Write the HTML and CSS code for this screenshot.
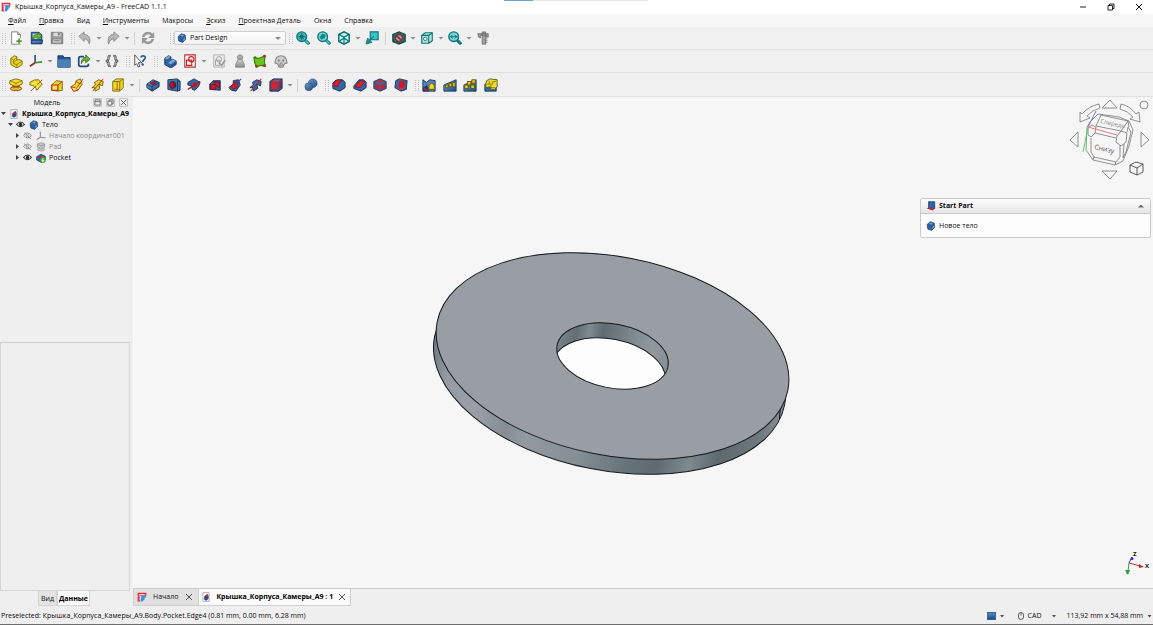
FILE: index.html
```html
<!DOCTYPE html>
<html lang="ru">
<head>
<meta charset="utf-8">
<title>Крышка_Корпуса_Камеры_A9 - FreeCAD 1.1.1</title>
<link rel="stylesheet" href="styles.css">
</head>
<body>
<svg class="defs" aria-hidden="true">
  <defs>
    <linearGradient id="gBlue" x1="0" y1="0" x2="1" y2="1"><stop offset="0" stop-color="#729fcf"/><stop offset="1" stop-color="#204a87"/></linearGradient>
    <linearGradient id="gGrey" x1="0" y1="0" x2="0" y2="1"><stop offset="0" stop-color="#d0d0d0"/><stop offset="1" stop-color="#8c8c8c"/></linearGradient>
  </defs>
  <symbol id="logo" viewBox="0 0 16 16"><path d="M1 1h14v5H5v9H1z" fill="#d6303a"/><path d="M3 3h10v2H4v8H3z" fill="#f6c8cb"/><path d="M7 6h8l-1 3h-3v1h2l-2 3h-1l-1 2H6z" fill="#3f8ee0"/></symbol>
  <symbol id="doc" viewBox="0 0 16 16"><path d="M3 1h10v14H3z" fill="#fff" stroke="#888"/><path d="M5 7l4-3 3 2v5l-4 3-3-2z" fill="#234f8e"/><path d="M7 5l4-2 1 4-4 2z" fill="#c4283a"/></symbol>
  <symbol id="new" viewBox="0 0 16 16"><path d="M3 1h7l3 3v11H3z" fill="#fff" stroke="#777"/><path d="M10 1v3h3" fill="#ddd" stroke="#777"/><circle cx="11.500" cy="11.500" r="3.500" fill="#fff"/><path d="M11.500 8.500v6M8.500 11.500h6" stroke="#4b9a35" stroke-width="2"/></symbol>
  <symbol id="open" viewBox="0 0 16 16"><path d="M1.500 1.500h9l3 3v10h-12z" fill="#3465a4" stroke="#173a63"/><path d="M3 3h9v6H3z" fill="#d8e4ec"/><path d="M3 9c0-4 3-6 6-5V2l5 4-5 4V7C7 7 5 8 3 9z" fill="#67b832" stroke="#285c0a" stroke-width=".7"/><path d="M1.500 14.500l1-4h12l-1 4z" fill="url(#gBlue)" stroke="#173a63"/></symbol>
  <symbol id="save" viewBox="0 0 16 16"><path d="M1.500 1.500h12l1 1v12h-13z" fill="#9a9a9a" stroke="#737373"/><path d="M4 2h8v4H4z" fill="#ddd"/><path d="M9 2h2v3H9z" fill="#777"/><path d="M3 9h10v5H3z" fill="#c9c9c9" stroke="#858585"/><path d="M5 11h6" stroke="#777"/></symbol>
  <symbol id="undo" viewBox="0 0 16 16"><path d="M1 6l6-5v3c5 0 8 4 6 11-1-4-3-6-6-6v3z" fill="#b7b7b7" stroke="#8c8c8c"/></symbol>
  <symbol id="redo" viewBox="0 0 16 16"><path d="M15 6L9 1v3C4 4 1 8 3 15c1-4 3-6 6-6v3z" fill="#b7b7b7" stroke="#8c8c8c"/></symbol>
  <symbol id="refresh" viewBox="0 0 16 16"><path d="M2.500 7c1-5 7-6 10-2.500M13.500 9c-1 5-7 6-10 2.500" fill="none" stroke="#999" stroke-width="2.800"/><path d="M15 1v7H8zM1 15V8h7z" fill="#999"/></symbol>
  <symbol id="body" viewBox="0 0 16 16"><path d="M2 5l4-3 3 1v4l2-1 4 2v4l-6 4-7-4z" fill="#3465a4" stroke="#122f55"/><path d="M2 5l4-3 3 1-4 3zM6 10l5-4 4 2-6 4z" fill="#7ba5d6"/><path d="M9 12v4l6-4V8z" fill="#2a5590"/></symbol>
  <symbol id="bodyround" viewBox="0 0 16 16"><path d="M2 5l5-4 6 2 1 7-5 5-6-2-1-4z" fill="#2f609f" stroke="#153967"/><path d="M5 4l3-2 3 2-3 2zM10 10l3-3v3l-3 3z" fill="#6f9bcd"/></symbol>
  <symbol id="zoomfit" viewBox="0 0 16 16"><path d="M10 10l5 5" stroke="#087f83" stroke-width="3.500"/><path d="M10 10l4.500 4.500" stroke="#3ec5c8" stroke-width="1.500"/><circle cx="6.500" cy="6.500" r="5.500" fill="#4fb9bc" stroke="#087478" stroke-width="1.600"/><path d="M6.500 2.500v8M2.500 6.500h8M4 4l5 5M9 4L4 9" stroke="#0b6165" stroke-width="1.100"/></symbol>
  <symbol id="zoomsel" viewBox="0 0 16 16"><path d="M10 10l5 5" stroke="#087f83" stroke-width="3.500"/><path d="M10 10l4.500 4.500" stroke="#3ec5c8" stroke-width="1.500"/><circle cx="6.500" cy="6.500" r="5.500" fill="#7fd2d5" stroke="#087478" stroke-width="1.600"/><path d="M3 7l3-4 4 1-1 4-4 2z" fill="#13868a"/></symbol>
  <symbol id="zoomarrow" viewBox="0 0 16 16"><path d="M10 10l5 5" stroke="#087f83" stroke-width="3.500"/><circle cx="6.500" cy="6.500" r="5.500" fill="#7fd2d5" stroke="#087478" stroke-width="1.600"/><path d="M3 6.500h7M5 4.500l-2 2 2 2M8 4.500l2 2-2 2" fill="none" stroke="#066"/></symbol>
  <symbol id="cube" viewBox="0 0 16 16"><path d="M2 4l6-3 6 3v8l-6 3-6-3z" fill="#c7eeee" stroke="#0b7175" stroke-width="1.600"/><path d="M2 4l6 3 6-3M8 7v8M2 12l6-4 6 4" fill="none" stroke="#0b7175" stroke-width="1.300"/></symbol>
  <symbol id="wire" viewBox="0 0 16 16"><path d="M2 5l4-3h8v9l-4 3H2z" fill="#b6e4e3" stroke="#0b7175" stroke-width="1.300"/><path d="M2 5h8l4-3M10 5v9" fill="none" stroke="#0b7175" stroke-width="1.200"/><circle cx="6" cy="9" r="2" fill="#e9ffff" stroke="#187276"/></symbol>
  <symbol id="align" viewBox="0 0 16 16"><path d="M6 1h9v9H6z" fill="#37c4c7" stroke="#087478" stroke-width="1.300"/><path d="M10 6l-5 4-2-2-2 7 7-2-2-2z" fill="#188f94" stroke="#066" stroke-width=".7"/></symbol>
  <symbol id="noentry" viewBox="0 0 16 16"><path d="M1 4l7-3 7 3v8l-7 3-7-3z" fill="#1d7377" stroke="#164547" stroke-width="1.500"/><circle cx="8" cy="8" r="4" fill="#8fb4b4" stroke="#9a2424" stroke-width="1.700"/><path d="M5 5l6 6" stroke="#9a2424" stroke-width="1.700"/></symbol>
  <symbol id="caliper" viewBox="0 0 16 16"><path d="M7 1h4v14H7zM2 3h12v4h-2V5H5v3L3 7z" fill="#a0a0a0" stroke="#5d5d5d" stroke-width=".8"/><path d="M11 9h2M11 11h2M11 13h2" stroke="#777"/></symbol>
  <symbol id="partyellow" viewBox="0 0 16 16"><path d="M2 5l4-3 3 1v4l2-1 4 2v4l-6 4-7-4z" fill="#edd423" stroke="#796908"/><path d="M2 5l3 2v4l4 1v4M5 7l4-3M9 12l6-4M5 10l5-4" fill="none" stroke="#796908" stroke-width=".8"/></symbol>
  <symbol id="axes" viewBox="0 0 16 16"><path d="M7 1v9" stroke="#345d8c" stroke-width="2"/><path d="M7 10l8-1" stroke="#389035" stroke-width="2"/><path d="M7 10l-6 4" stroke="#972c26" stroke-width="2"/></symbol>
  <symbol id="axesgrey" viewBox="0 0 16 16"><path d="M7 1v9l8 1M7 10l-6 4" fill="none" stroke="#929292" stroke-width="1.800"/></symbol>
  <symbol id="folder" viewBox="0 0 16 16"><path d="M1 2h6l1 2h7v11H1z" fill="#26568f" stroke="#183c6a"/><path d="M1 6h14v9H1z" fill="#4c7eb8"/></symbol>
  <symbol id="link" viewBox="0 0 16 16"><path d="M8 3H4Q2 3 2 5v7q0 2 2 2h7q2 0 2-2v-1" fill="none" stroke="#204b7e" stroke-width="2"/><path d="M5 11c0-5 2-7 5-7V1l5 5-5 4V7c-2 0-4 1-5 4z" fill="#68b737" stroke="#28570c" stroke-width=".8"/></symbol>
  <symbol id="braces" viewBox="0 0 16 16"><path d="M6.500 2H6Q4 2 4 4v2L2 8l2 2v2q0 2 2 2h.5M9.500 2h.5q2 0 2 2v2l2 2-2 2v2q0 2-2 2h-.5" fill="none" stroke="#444" stroke-width="2.400"/><path d="M6 2Q4 2 4 4v2L2 8l2 2v2q0 2 2 2M10 2q2 0 2 2v2l2 2-2 2v2q0 2-2 2" fill="none" stroke="#ddd" stroke-width=".8"/></symbol>
  <symbol id="help" viewBox="0 0 16 16"><path d="M2 1l8 9H6l2 4-2 1-2-4-2 2z" fill="#fff" stroke="#444"/><path d="M9 4c1-3 5-2 5 0 0 3-3 2-3 5" fill="none" stroke="#2d5c94" stroke-width="2"/><circle cx="11" cy="12" r="1.400" fill="#2d5c94"/></symbol>
  <symbol id="sketch" viewBox="0 0 16 16"><path d="M2 1h12v14H2z" fill="#fff" stroke="#b92d2d" stroke-width="1.200"/><path d="M4 7h6v6H4z" fill="none" stroke="#ce1f27" stroke-width="1.300"/><circle cx="9.500" cy="6" r="3" fill="none" stroke="#ce1f27" stroke-width="1.300"/></symbol>
  <symbol id="sketchgrey" viewBox="0 0 16 16"><path d="M2 1h12v14H2z" fill="#ededed" stroke="#aaa"/><path d="M4 7h5v6H4z" fill="none" stroke="#999"/><circle cx="8" cy="6" r="3" fill="none" stroke="#999"/><path d="M8 10l3 3 4-6" fill="none" stroke="#999" stroke-width="2"/></symbol>
  <symbol id="pawn" viewBox="0 0 16 16"><circle cx="8" cy="4" r="3" fill="#aaa" stroke="#888"/><path d="M6 6h4l3 6v3H3v-3z" fill="url(#gGrey)" stroke="#888"/></symbol>
  <symbol id="green" viewBox="0 0 16 16"><path d="M1 4l5 1 8-3-1 6 1 6-5-1-5 2-2-5z" fill="#67c818" stroke="#347709" stroke-width="1.200"/><circle cx="13" cy="2.500" r="1.600" fill="#b42f22"/><circle cx="4" cy="14" r="1.600" fill="#b42f22"/><circle cx="2.500" cy="4" r="1.300" fill="#43780d"/><circle cx="13" cy="13" r="1.600" fill="#b42f22"/></symbol>
  <symbol id="dolly" viewBox="0 0 16 16"><path d="M1 10q1-8 7-8t7 8l-3 1-2 4H6l-2-4z" fill="#cecece" stroke="#888" stroke-width="1.300"/><circle cx="5.500" cy="7.500" r="1.200" fill="#777"/><circle cx="10.500" cy="7.500" r="1.200" fill="#777"/><path d="M7 10h2l1 3H6z" fill="#aaa" stroke="#888" stroke-width=".7"/></symbol>
  <symbol id="pad" viewBox="0 0 16 16"><ellipse cx="8" cy="12" rx="6.500" ry="2.500" fill="#d7c42b" stroke="#a22b1a"/><path d="M4 8h8v3H4z" fill="#b43a1a"/><path d="M1 3l7-2 7 2v4l-7 3-7-3z" fill="#f2dc2b" stroke="#75670c"/><path d="M1 3l7 3 7-3M8 6v4" fill="none" stroke="#75670c" stroke-width=".8"/></symbol>
  <symbol id="revolve" viewBox="0 0 16 16"><path d="M1 5q5-4 10-3l4 5-6 7q-2-6-8-6z" fill="#f2dc2b" stroke="#75670c"/><path d="M2 15L15 2" stroke="#a34d16" stroke-width="1.100"/><path d="M4 6q5 0 6 4" fill="none" stroke="#fff59c"/></symbol>
  <symbol id="loft" viewBox="0 0 16 16"><path d="M2 8l5-5 7 1v10l-5 1-7-1z" fill="#edce24" stroke="#75670c"/><path d="M2 8h7v6H2z" fill="#f8e654" stroke="#c32020" stroke-width="1.300"/><path d="M9 8l5-4" stroke="#c32020"/></symbol>
  <symbol id="pipe" viewBox="0 0 16 16"><path d="M1 10l5-3 1-4 5-2 2 6-5 7-5 1z" fill="#f0d728" stroke="#75670c"/><path d="M1 10l5 1 3 3-5 1z" fill="#ffee67" stroke="#ba2920"/><path d="M8 11L15 1M7 4l5 3" stroke="#ba2920"/></symbol>
  <symbol id="helix" viewBox="0 0 16 16"><path d="M1 11l4-3-1-3 5-3 5 2-1 5-4-2 1 5-5 3-1-4z" fill="#efd62a" stroke="#695b08"/><path d="M2 15L14 1" stroke="#ba2920" stroke-width="1.100"/></symbol>
  <symbol id="box" viewBox="0 0 16 16"><path d="M2 4l4-3h8v10l-4 4H2z" fill="#f0d728" stroke="#75670c"/><path d="M2 4h8l4-3M10 4v11" fill="none" stroke="#75670c"/><path d="M7 13V4M4 13h6" stroke="#b94b1d"/></symbol>
  <symbol id="pocket" viewBox="0 0 16 16"><path d="M1 7l7-5 7 3v5l-8 5-6-4z" fill="url(#gBlue)" stroke="#122f55"/><path d="M1 7l6 3 8-5M7 10v5" fill="none" stroke="#122f55" stroke-width=".8"/><path d="M5 6l4-2 3 1-4 3z" fill="#cc1c27" stroke="#4c1530" stroke-width=".8"/></symbol>
  <symbol id="hole" viewBox="0 0 16 16"><path d="M1 2l11-1 3 3v10l-3 1-11-2z" fill="#3f72b0" stroke="#122f55"/><path d="M12 3v12M12 3l3 1" stroke="#122f55"/><ellipse cx="6.500" cy="8" rx="3.500" ry="4" fill="#bd1822" stroke="#271d38"/><path d="M7 5q3 3 0 6" fill="none" stroke="#3e1730"/></symbol>
  <symbol id="groove" viewBox="0 0 16 16"><path d="M1 5l7-4 7 4-2 5-4 4-3-1-1-4-4-1z" fill="#3465a4" stroke="#122f55"/><path d="M5 7l5-2 3 3-4 3z" fill="#d21b24"/><path d="M1 13L15 4" stroke="#aa1820" stroke-width="1.400"/></symbol>
  <symbol id="loftred" viewBox="0 0 16 16"><path d="M2 7l4-4h8v11l-12-1z" fill="#3465a4" stroke="#122f55"/><path d="M3 7l6 1v5H3zM6 4l7 1v7l-3-3z" fill="#d61822" stroke="#65152a"/></symbol>
  <symbol id="pipered" viewBox="0 0 16 16"><path d="M1 11l5-4V3l6-1 2 6-5 7-5-1z" fill="#3465a4" stroke="#122f55"/><path d="M3 10l4-5 5-1-2 7-4 2z" fill="#d61822" stroke="#65152a" stroke-width=".7"/><path d="M9 7l6-6" stroke="#2c5ba0" stroke-width="1.500"/></symbol>
  <symbol id="helixred" viewBox="0 0 16 16"><path d="M1 11l4-3-1-3 5-3 5 2-1 5-4-2 1 5-5 3-1-4z" fill="#386eaf" stroke="#122f55"/><path d="M2 15L14 1" stroke="#ba2920" stroke-width="1.200"/></symbol>
  <symbol id="boxred" viewBox="0 0 16 16"><path d="M1 4l4-3h10v11l-4 3H1z" fill="#2e5690" stroke="#122f55"/><path d="M2 5h8v8H2z" fill="#d7212b"/><path d="M3 4l3-2h7l-2 2z" fill="#e23b42"/><path d="M12 5l2-2v8l-2 2z" fill="#a91b2b"/></symbol>
  <symbol id="bool" viewBox="0 0 16 16"><circle cx="10" cy="6" r="5" fill="url(#gBlue)" stroke="#244f83" stroke-width=".7"/><circle cx="5.500" cy="10" r="4.500" fill="url(#gBlue)" stroke="#244f83" stroke-width=".7"/></symbol>
  <symbol id="fillet" viewBox="0 0 16 16"><path d="M1 6q2-4 6-4h5l3 3v6l-6 4-8-3z" fill="#3465a4" stroke="#122f55"/><path d="M1 9q1-6 6-7l5 1q-5 2-5 7z" fill="#d9202a" stroke="#65152a" stroke-width=".7"/></symbol>
  <symbol id="chamfer" viewBox="0 0 16 16"><path d="M1 9l6-7h5l3 3v6l-6 4-8-3z" fill="#3465a4" stroke="#122f55"/><path d="M2 10l6-7 6 1-6 7z" fill="#dd222b" stroke="#65152a" stroke-width=".7"/></symbol>
  <symbol id="draft" viewBox="0 0 16 16"><path d="M1 4l7-3 7 3v8l-7 3-7-3z" fill="#3465a4" stroke="#122f55"/><path d="M2 6l5 2v6l-4-2zM9 8l5-2-1 6-4 2z" fill="#cf202a"/><path d="M3 4l5-2 5 2-5 2z" fill="#b8303e"/></symbol>
  <symbol id="thick" viewBox="0 0 16 16"><path d="M2 3l4-2 9 2-1 10-6 2-7-4z" fill="#3465a4" stroke="#122f55"/><path d="M6 3l7 1-1 7H5z" fill="#cc1d27"/><path d="M5 11h7l-4 3-5-3z" fill="#e23138"/></symbol>
  <symbol id="mirror" viewBox="0 0 16 16"><path d="M1 15V2l4 3 4-3 6 1v12z" fill="#5583b9" stroke="#122f55"/><path d="M1 11l5-3 2 7H1z" fill="#1d3767"/><path d="M8 8l3-2 3 2v5H8z" fill="#efd62a" stroke="#695b08"/><path d="M2 12l4 2" stroke="#c52a25" stroke-width="2"/></symbol>
  <symbol id="linear" viewBox="0 0 16 16"><path d="M1 8l14-6v13H1z" fill="url(#gBlue)" stroke="#173a63"/><path d="M3 8h3v3H3zM7 6h3v4H7zM11 5h3v5h-3z" fill="#e0c823" stroke="#5e560f"/></symbol>
  <symbol id="polar" viewBox="0 0 16 16"><path d="M1 8l14-6v13H1z" fill="url(#gBlue)" stroke="#173a63"/><path d="M2 8h4v4H2zM5 4h4v4H5zM10 2h4v4h-4zM9 8h4v4H9z" fill="#e0c823" stroke="#5e560f"/></symbol>
  <symbol id="multi" viewBox="0 0 16 16"><path d="M1 7L14 2v13H1z" fill="#3465a4" stroke="#173a63"/><path d="M3 3l4-2 8 1v8l-3 3H8l-1-3-5 1V7z" fill="#edda33" stroke="#5e560f"/><path d="M6 3v4h4V4h4M8 8v3h5M3 7h3" fill="none" stroke="#8c7d18"/></symbol>
  <symbol id="eye" viewBox="0 0 16 16"><path d="M1 8q7-9 14 0-7 8-14 0z" fill="#fff" stroke="#222" stroke-width="1.800"/><circle cx="8" cy="8" r="3" fill="#222"/></symbol>
  <symbol id="eyeoff" viewBox="0 0 16 16"><path d="M1 8q7-9 14 0-7 8-14 0zM2 3l12 11" fill="none" stroke="#888" stroke-width="1.500"/><circle cx="8" cy="8" r="2.500" fill="none" stroke="#888"/></symbol>
  <symbol id="padgrey" viewBox="0 0 16 16"><ellipse cx="8" cy="12" rx="6" ry="2.500" fill="#ccc" stroke="#999"/><path d="M2 3l6-2 6 2v5l-6 3-6-3z" fill="#c9c9c9" stroke="#898989"/><path d="M2 4l6 2 6-2" fill="none" stroke="#898989"/></symbol>
  <symbol id="pockettree" viewBox="0 0 16 16"><path d="M1 6l7-4 7 3v6l-7 4-7-4z" fill="#3465a4" stroke="#122f55"/><path d="M5 4l5 1v4l-5-1z" fill="#c42834"/><circle cx="11" cy="11" r="4.500" fill="#42a51f"/><path d="M11 8v5M9 11l2 3 2-3" stroke="#fff" stroke-width="1.500" fill="none"/></symbol>
  <symbol id="part" viewBox="0 0 16 16"><path d="M4 1h10v11H4z" fill="#2d5c9c" stroke="#203966"/><path d="M8 2v9" stroke="#5c86bb"/><path d="M1 12l4-2 9 2-3 3z" fill="#b82834"/></symbol>
  <symbol id="mouse" viewBox="0 0 16 16"><rect x="3" y="1" width="10" height="14" rx="5" fill="none" stroke="#333" stroke-width="1.500"/><path d="M8 2v5" stroke="#333" stroke-width="1.500"/></symbol>
  <symbol id="close" viewBox="0 0 16 16"><path d="M2 2l12 12M14 2L2 14" stroke="currentColor" stroke-width="2"/></symbol>
  <symbol id="max" viewBox="0 0 16 16"><path d="M2 5h9v9H2zM5 5V2h9v9h-3" fill="none" stroke="currentColor" stroke-width="1.800"/></symbol>
  <symbol id="dock" viewBox="0 0 16 16"><path d="M2 2h12v12H2zM2 6h12" fill="none" stroke="currentColor" stroke-width="1.800"/></symbol>
</svg>

<div class="app">
  <header class="titlebar">
    <svg class="ic10"><use href="#logo"/></svg>
    <h1 class="title">Крышка_Корпуса_Камеры_A9 - FreeCAD 1.1.1</h1>
    <span class="snap"></span>
    <div class="winbtns">
      <button class="win" aria-label="Свернуть"><svg class="ic8" viewBox="0 0 16 16"><path d="M2 8h12" stroke="#222" stroke-width="2"/></svg></button>
      <button class="win" aria-label="Развернуть"><svg class="ic8"><use href="#max"/></svg></button>
      <button class="win" aria-label="Закрыть"><svg class="ic8"><use href="#close"/></svg></button>
    </div>
  </header>

  <nav class="menubar">
    <button class="menu"><u>Ф</u>айл</button><button class="menu"><u>П</u>равка</button><button class="menu">Вид</button><button class="menu"><u>И</u>нструменты</button><button class="menu">Макросы</button><button class="menu"><u>Э</u>скиз</button><button class="menu"><u>П</u>роектная Деталь</button><button class="menu">Окна</button><button class="menu">Справка</button>
  </nav>

  <div class="toolbar">
    <i class="grip"></i>
    <div class="group g3">
      <button class="btn" aria-label="Создать"><svg><use href="#new"/></svg></button>
      <button class="btn" aria-label="Открыть"><svg><use href="#open"/></svg></button>
      <button class="btn" aria-label="Сохранить"><svg><use href="#save"/></svg></button>
    </div>
    <i class="grip gap"></i>
    <div class="group">
      <button class="btn" aria-label="Отменить"><svg><use href="#undo"/></svg></button><i class="caret"></i>
      <button class="btn" aria-label="Повторить"><svg><use href="#redo"/></svg></button><i class="caret"></i>
      <i class="sep"></i>
      <button class="btn" aria-label="Обновить"><svg><use href="#refresh"/></svg></button>
    </div>
    <i class="grip wide"></i>
    <div class="combo">
      <svg class="ic10"><use href="#bodyround"/></svg>
      <select aria-label="Верстак"><option>Part Design</option></select>
      <i class="caret"></i>
    </div>
    <i class="grip near"></i>
    <div class="group g3">
      <button class="btn" aria-label="Вместить всё"><svg><use href="#zoomfit"/></svg></button>
      <button class="btn" aria-label="Вместить выделенное"><svg><use href="#zoomsel"/></svg></button>
      <button class="btn" aria-label="Вид"><svg><use href="#cube"/></svg></button>
    </div>
    <i class="caret"></i>
    <div class="group">
      <button class="btn" aria-label="Выровнять"><svg><use href="#align"/></svg></button>
      <i class="sep"></i>
      <button class="btn" aria-label="Стиль отображения"><svg><use href="#noentry"/></svg></button><i class="caret"></i>
      <button class="btn" aria-label="Каркас"><svg><use href="#wire"/></svg></button><i class="caret"></i>
      <button class="btn" aria-label="Масштаб"><svg><use href="#zoomarrow"/></svg></button><i class="caret"></i>
      <button class="btn" aria-label="Измерить"><svg><use href="#caliper"/></svg></button>
    </div>
  </div>

  <div class="toolbar">
    <i class="grip"></i>
    <div class="group">
      <button class="btn" aria-label="Деталь"><svg><use href="#partyellow"/></svg></button>
      <button class="btn" aria-label="Оси"><svg><use href="#axes"/></svg></button><i class="caret"></i>
      <button class="btn" aria-label="Группа"><svg><use href="#folder"/></svg></button>
      <button class="btn" aria-label="Ссылка"><svg><use href="#link"/></svg></button><i class="caret"></i>
      <button class="btn" aria-label="Выражения"><svg><use href="#braces"/></svg></button>
    </div>
    <i class="grip gap"></i>
    <button class="btn" aria-label="Что это?"><svg><use href="#help"/></svg></button>
    <i class="grip gap"></i>
    <div class="group second">
      <button class="btn" aria-label="Новое тело"><svg><use href="#body"/></svg></button>
      <button class="btn" aria-label="Эскиз"><svg><use href="#sketch"/></svg></button><i class="caret"></i>
    </div>
    <div class="group g4">
      <button class="btn" aria-label="Проверить эскиз"><svg><use href="#sketchgrey"/></svg></button>
      <button class="btn" aria-label="Проверить геометрию"><svg><use href="#pawn"/></svg></button>
      <button class="btn" aria-label="Связующий объект"><svg><use href="#green"/></svg></button>
      <button class="btn" aria-label="Клон"><svg><use href="#dolly"/></svg></button>
    </div>
  </div>

  <div class="toolbar last">
    <i class="grip"></i>
    <div class="group g6">
      <button class="btn" aria-label="Выдавить"><svg><use href="#pad"/></svg></button>
      <button class="btn" aria-label="Вращение"><svg><use href="#revolve"/></svg></button>
      <button class="btn" aria-label="Профиль"><svg><use href="#loft"/></svg></button>
      <button class="btn" aria-label="Труба"><svg><use href="#pipe"/></svg></button>
      <button class="btn" aria-label="Спираль"><svg><use href="#helix"/></svg></button>
      <button class="btn" aria-label="Примитив"><svg><use href="#box"/></svg></button>
    </div>
    <i class="caret"></i><i class="sep"></i>
    <div class="group g7">
      <button class="btn" aria-label="Карман"><svg><use href="#pocket"/></svg></button>
      <button class="btn" aria-label="Отверстие"><svg><use href="#hole"/></svg></button>
      <button class="btn" aria-label="Проточка"><svg><use href="#groove"/></svg></button>
      <button class="btn" aria-label="Вычесть профиль"><svg><use href="#loftred"/></svg></button>
      <button class="btn" aria-label="Вычесть трубу"><svg><use href="#pipered"/></svg></button>
      <button class="btn" aria-label="Вычесть спираль"><svg><use href="#helixred"/></svg></button>
      <button class="btn" aria-label="Вычесть примитив"><svg><use href="#boxred"/></svg></button>
    </div>
    <i class="caret"></i><i class="sep"></i>
    <button class="btn" aria-label="Булева операция"><svg><use href="#bool"/></svg></button>
    <i class="grip gap"></i>
    <div class="group g4">
      <button class="btn" aria-label="Скругление"><svg><use href="#fillet"/></svg></button>
      <button class="btn" aria-label="Фаска"><svg><use href="#chamfer"/></svg></button>
      <button class="btn" aria-label="Уклон"><svg><use href="#draft"/></svg></button>
      <button class="btn" aria-label="Толщина"><svg><use href="#thick"/></svg></button>
    </div>
    <i class="grip gap"></i>
    <div class="group g4">
      <button class="btn" aria-label="Отражение"><svg><use href="#mirror"/></svg></button>
      <button class="btn" aria-label="Линейный массив"><svg><use href="#linear"/></svg></button>
      <button class="btn" aria-label="Круговой массив"><svg><use href="#polar"/></svg></button>
      <button class="btn" aria-label="Множественное преобразование"><svg><use href="#multi"/></svg></button>
    </div>
  </div>

  <div class="work">
    <aside class="side">
      <div class="dockhead">
        <h2 class="docktitle">Модель</h2>
        <button class="dockbtn" aria-label="Свернуть панель"><svg><use href="#dock"/></svg></button>
        <button class="dockbtn" aria-label="Открепить"><svg><use href="#max"/></svg></button>
        <button class="dockbtn" aria-label="Закрыть панель"><svg><use href="#close"/></svg></button>
      </div>
      <ul class="tree">
        <li class="node root"><i class="tri"></i><svg class="ic10"><use href="#doc"/></svg><span>Крышка_Корпуса_Камеры_A9</span></li>
        <li class="node l1"><i class="tri"></i><svg class="eye"><use href="#eye"/></svg><svg class="ic10"><use href="#bodyround"/></svg><span>Тело</span></li>
        <li class="node l2 off"><i class="tri shut"></i><svg class="eye"><use href="#eyeoff"/></svg><svg class="ic10"><use href="#axesgrey"/></svg><span>Начало координат001</span></li>
        <li class="node l2 off"><i class="tri shut"></i><svg class="eye"><use href="#eyeoff"/></svg><svg class="ic10"><use href="#padgrey"/></svg><span>Pad</span></li>
        <li class="node l2"><i class="tri shut"></i><svg class="eye"><use href="#eye"/></svg><svg class="ic10"><use href="#pockettree"/></svg><span>Pocket</span></li>
      </ul>
      <div class="props"></div>
      <div class="sidetabs"><button class="stab">Вид</button><button class="stab on">Данные</button></div>
    </aside>

    <main class="main">
      <div class="view">
        <svg class="scene" viewBox="133 97 1020 491">
          <defs>
            <linearGradient id="rim" gradientUnits="userSpaceOnUse" x1="433" y1="0" x2="786" y2="0">
              <stop offset="0" stop-color="#737d84"/><stop offset=".05" stop-color="#959ca3"/><stop offset=".15" stop-color="#989fa6"/><stop offset=".24" stop-color="#858e95"/><stop offset=".3" stop-color="#929aa1"/><stop offset=".45" stop-color="#858f96"/><stop offset=".6" stop-color="#667279"/><stop offset=".68" stop-color="#5f6b71"/><stop offset=".77" stop-color="#7e8a8e"/><stop offset=".85" stop-color="#5d686f"/><stop offset=".95" stop-color="#6e797f"/><stop offset="1" stop-color="#848d93"/>
            </linearGradient>
            <linearGradient id="bore" gradientUnits="userSpaceOnUse" x1="555" y1="0" x2="668" y2="0">
              <stop offset="0" stop-color="#7b858b"/><stop offset=".15" stop-color="#626d74"/><stop offset=".26" stop-color="#7f8b8f"/><stop offset=".38" stop-color="#5f6b72"/><stop offset=".6" stop-color="#78838a"/><stop offset=".85" stop-color="#929aa1"/><stop offset="1" stop-color="#858e95"/>
            </linearGradient>
            <clipPath id="bclip"><ellipse cx="612" cy="356" rx="56.500" ry="32" transform="rotate(11 612 356)"/></clipPath>
          </defs>
          <g stroke="#16191c" stroke-width="1">
            <ellipse cx="609" cy="371" rx="178.500" ry="99.500" transform="rotate(11 609 371)" fill="url(#rim)"/>
            <path d="M780 407l-1 13" fill="none"/>
            <ellipse cx="612" cy="356" rx="178.800" ry="99.500" transform="rotate(11 612 356)" fill="#989ea4"/>
            <ellipse cx="612" cy="356" rx="56.500" ry="32" transform="rotate(11 612 356)" fill="url(#bore)" stroke="none"/>
            <g clip-path="url(#bclip)"><ellipse cx="609" cy="371" rx="56.500" ry="32" transform="rotate(11 609 371)" fill="#fdfdfd"/></g>
            <ellipse cx="612" cy="356" rx="56.500" ry="32" transform="rotate(11 612 356)" fill="none"/>
          </g>
        </svg>

        <svg class="navcube" viewBox="1065 97 88 87">
          <g fill="none" stroke="#777" stroke-width=".8" stroke-linejoin="round">
            <path d="M1102 108h15l-7-8zM1102 171h15l-7 8zM1078 132v15l-8-7zM1141 132v15l8-7z"/>
            <circle cx="1144" cy="105" r="4"/>
            <path d="M1080 112l2 2q7-8 17-10l1 4q-8 2-13 8l3 2-10 4zM1121 104q9 2 15 10l3-2 1 10-10-3 3-2q-5-6-13-8z"/>
            <path d="M1098 114l21 3 10 4 4 9-4 16-6 15-8 4-22-5-7-10 1-23 3-5z"/>
            <path d="M1101 115l27 6-7 10-25-5zM1088 128l4-3 4 2-1 6-4 4-3-2zM1095 133l21 5M1117 136l4-5 6 2-1 9-5 4-5-4zM1091 138v14l3 5 22 5 4-5v-12M1094 157l-1 3M1116 162l-1 3M1124 144l-1 14 3-6 5-20-3-5-1 5M1128 121l1 6"/>
            <path d="M1130 165l6-3 7 2v8l-6 3-7-3zM1130 165l7 3 6-4M1137 168v7" stroke="#333"/>
          </g>
          <path d="M1088 127l8-16" stroke="#7476dc"/><path d="M1088 127l-5 25" stroke="#55dc61"/><path d="M1088 127l29 8" stroke="#ed7c7c"/>
          <text class="face" x="1094" y="149" transform="rotate(13 1094 149)">Снизу</text>
          <text class="face small" x="1100" y="123" transform="rotate(12 1100 123)">Спереди</text>
        </svg>

        <section class="task">
          <button class="taskhead"><svg class="ic10"><use href="#part"/></svg><span>Start Part</span><i class="up"></i></button>
          <button class="taskitem"><svg class="ic10"><use href="#bodyround"/></svg><span>Новое тело</span></button>
        </section>

        <svg class="triad" viewBox="1120 545 33 35">
          <path d="M1129 563l2-4" stroke="#2929cc"/><circle cx="1132" cy="558.500" r="1.500" fill="#2929cc"/>
          <path d="M1129 563l11 3" stroke="#bf2d2d"/><path d="M1139 564l5 3-5 1z" fill="#bf2d2d"/>
          <path d="M1129 563l-1 8" stroke="#27a53b"/>
          <text class="ax" x="1133" y="556">Z</text><text class="ax" x="1145" y="568">X</text><text class="ax" x="1126" y="574">Y</text>
          <path d="M1125 570h5l-3 5z" fill="#27a53b" fill-opacity=".8"/>
        </svg>
      </div>
      <div class="doctabs">
        <div class="dtab first"><svg class="ic10"><use href="#logo"/></svg><button class="dname">Начало</button><button class="x" aria-label="Закрыть вкладку"><svg><use href="#close"/></svg></button></div>
        <div class="dtab on"><svg class="ic10"><use href="#doc"/></svg><button class="dname">Крышка_Корпуса_Камеры_A9 : 1</button><button class="x" aria-label="Закрыть вкладку"><svg><use href="#close"/></svg></button></div>
      </div>
    </main>
  </div>

  <footer class="status">
    <span class="msg">Preselected: Крышка_Корпуса_Камеры_A9.Body.Pocket.Edge4 (0.81 mm, 0.00 mm, 6.28 mm)</span>
    <button class="sbtn" aria-label="Уведомления"><i class="swatch"></i><i class="dark"></i></button>
    <button class="sbtn nav"><svg class="ic8"><use href="#mouse"/></svg><span>CAD</span><i class="dark far"></i></button>
    <button class="sbtn"><span>113,92 mm x 54,88 mm</span><i class="dark"></i></button>
  </footer>
</div>
</body>
</html>
```

FILE: styles.css
```css
* { box-sizing: border-box; }
body { margin: 0; font-family: "Open Sans", "Noto Sans", sans-serif; font-size: 7px; line-height: 10px; color: #0c0c0c; background: #efefef; }
button, select { margin: 0; padding: 0; border: 0; background: none; font: inherit; color: inherit; }
h1, h2, ul { margin: 0; padding: 0; font: inherit; list-style: none; }
i { display: block; flex: none; }
svg { display: block; flex: none; }
.defs { position: absolute; width: 0; height: 0; }
.app { display: flex; flex-direction: column; min-height: 100vh; }
.ic8 { width: 8px; height: 8px; }
.ic10 { width: 10px; height: 10px; }

.titlebar { position: relative; display: flex; align-items: center; height: 14px; padding-left: 1px; gap: 4px; background: #fff; }
.snap { position: absolute; left: 504px; top: 0; width: 144px; height: 1px; border-left: 29px solid #6fa3d8; background: #e4e4e4; }
.winbtns { display: flex; margin-left: auto; height: 14px; }
.win { display: flex; align-items: center; justify-content: center; width: 28px; height: 13px; }

.menubar { display: flex; align-items: center; height: 13px; padding-left: 8px; gap: 13px; background: #f7f7f7; }
.menu { white-space: nowrap; }

.toolbar { display: flex; align-items: center; height: 23px; border-bottom: 1px solid #e0e0e0; background: #f0f0f0; padding-left: 2px; }
.toolbar.last { height: 24px; padding-top: 1px; }
.group { display: flex; align-items: center; justify-content: space-between; }
.g3 { width: 61px; }
.g4 { width: 82px; }
.g6 { width: 122px; }
.g7 { width: 143px; }
.second { margin: 0 1px 0 2px; }
.btn { display: flex; align-items: center; justify-content: center; flex: none; width: 20px; height: 20px; }
.btn svg { width: 14px; height: 14px; }
.grip { width: 4px; height: 13px; background: linear-gradient(#f0f0f0 1px, transparent 1px) 0 0 / 100% 2px, linear-gradient(90deg, #c4c4c4 1px, transparent 1px) 0 0 / 3px 100%; }
.grip.gap { margin-left: 4px; }
.grip.wide { margin-left: 12px; }
.grip.near { margin-left: 3px; }
.sep { width: 1px; height: 13px; margin: 0 3px; background: #d0d0d0; }
.caret { width: 8px; height: 3px; background: #8b8b8b; clip-path: polygon(1px 0, 7px 0, 4px 3px); }
.combo { position: relative; width: 112px; height: 14px; }
.combo select { width: 112px; height: 14px; padding-left: 15px; border: 1px solid #cfcfcf; border-radius: 2px; background: linear-gradient(#fdfdfd, #f3f3f3); appearance: none; }
.combo .ic10 { position: absolute; left: 3px; top: 2px; }
.combo .caret { position: absolute; right: 4px; top: 6px; }

.work { display: flex; flex: 1; }
.side { display: flex; flex-direction: column; width: 133px; }
.dockhead { display: flex; align-items: center; height: 11px; padding: 0 5px; gap: 4px; }
.docktitle { flex: 1; text-align: center; }
.dockbtn { display: flex; align-items: center; justify-content: center; width: 9px; height: 9px; border: 1px solid #c4c4c4; border-radius: 1px; color: #555; }
.dockbtn svg { width: 7px; height: 7px; }
.tree { flex: 1; }
.node { display: flex; align-items: center; height: 11px; gap: 3px; padding-left: 1px; white-space: nowrap; }
.root { font-weight: bold; color: #000; }
.l1 { padding-left: 8px; }
.l2 { padding-left: 15px; }
.off { color: #8b8b8b; }
.tri { width: 5px; height: 3px; background: #444; clip-path: polygon(0 0, 100% 0, 50% 100%); }
.tri.shut { height: 5px; clip-path: polygon(20% 0, 80% 50%, 20% 100%); }
.eye { width: 9px; height: 9px; margin-right: 1px; }
.props { height: 249px; margin-right: 3px; border: 1px solid #d4d4d4; border-top-color: #cecece; }
.sidetabs { display: flex; height: 15px; padding-left: 38px; }
.stab { padding: 1px 2px 0; height: 15px; border: 1px solid #d4d4d4; border-top: 0; background: #e4e4e4; }
.stab.on { padding: 1px 1px 0; background: #fbfbfb; font-weight: bold; color: #000; }

.main { display: flex; flex-direction: column; flex: 1; }
.view { position: relative; flex: 1; background: #f6f6f6; border-left: 1px solid #fafafa; }
.scene { position: absolute; inset: 0; width: 100%; height: 100%; }
.navcube { position: absolute; top: 0; right: 0; width: 88px; height: 87px; }
.triad { position: absolute; right: 0; bottom: 8px; width: 33px; height: 35px; }
.face { font-size: 7px; fill: #555; }
.face.small { font-size: 6px; fill: #888; }
.ax { font-size: 6px; font-weight: bold; fill: #111; }
.task { position: absolute; top: 101px; right: 2px; width: 231px; border: 1px solid #cbcbcb; border-radius: 2px; background: #fcfcfc; }
.taskhead { display: flex; align-items: center; width: 100%; height: 15px; padding: 0 6px 0 5px; gap: 3px; border-bottom: 1px solid #cbcbcb; background: linear-gradient(#fdfdfd, #e6e6e6); font-weight: bold; }
.taskitem { display: flex; align-items: center; height: 23px; padding-left: 5px; gap: 3px; }
.up { width: 6px; height: 3px; margin-left: auto; background: #666; clip-path: polygon(0 100%, 100% 100%, 50% 0); }

.doctabs { display: flex; height: 18px; border-top: 1px solid #c9cdc6; }
.dtab { display: flex; align-items: center; height: 17px; padding: 0 5px 0 3px; border: 1px solid #d0d0d0; border-top: 0; background: #e0e0e0; }
.dtab.on { padding: 0 4px 0 2px; background: #fbfbfb; font-weight: bold; color: #000; border-left: 0; }
.dname { padding: 0 7px 0 6px; white-space: nowrap; }
.on .dname { padding: 0 5px; }
.x { color: #555; }
.x svg { width: 8px; height: 8px; }

.status { display: flex; align-items: center; height: 19px; padding: 2px 0 0 1px; border-bottom: 1px solid #6c6c6c; }
.msg { flex: 1; }
.sbtn { display: flex; align-items: center; gap: 4px; margin-right: 12px; white-space: nowrap; }
.sbtn:last-child { margin: 0 1px 0 0; }
.sbtn.nav { gap: 3px; margin-right: 10px; }
.swatch { width: 9px; height: 8px; background: linear-gradient(#5b87bd, #204a87); border: 1px solid #34659f; }
.dark { width: 5px; height: 3px; background: #555; clip-path: polygon(0 0, 100% 0, 50% 100%); }
.dark.far { margin-left: 7px; }
```
